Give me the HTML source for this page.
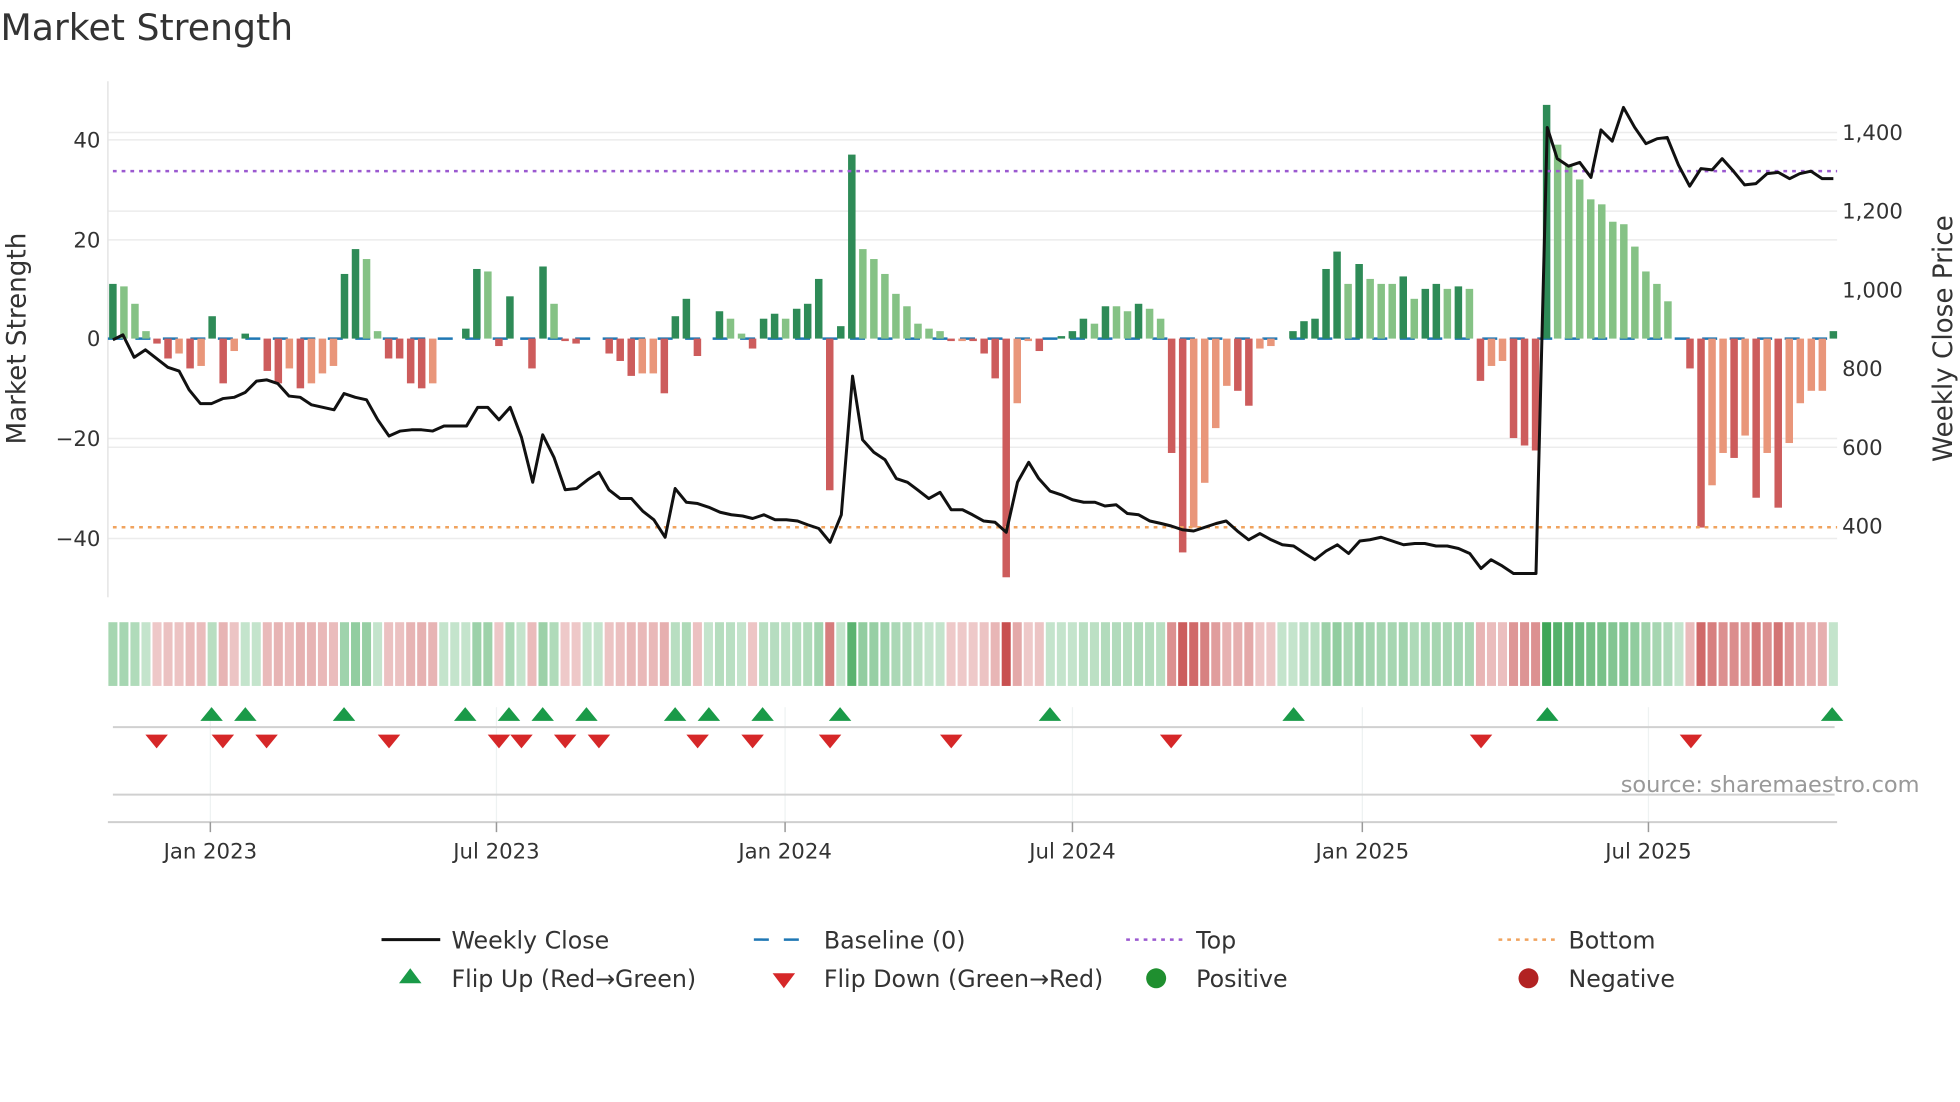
<!DOCTYPE html>
<html><head><meta charset="utf-8">
<style>
html,body{margin:0;padding:0;background:#fff;}
svg{display:block;font-family:"DejaVu Sans","Liberation Sans",sans-serif;}
</style></head>
<body>
<svg id="c" width="1960" height="1102" viewBox="0 0 1568 882" xmlns="http://www.w3.org/2000/svg">
<rect width="1568" height="882" fill="#fff"/>
<text x="0" y="32" font-size="29" fill="#333">Market Strength</text>
<g stroke="#ececec" stroke-width="1.2">
<line x1="86" y1="112" x2="1470" y2="112"/><line x1="86" y1="192" x2="1470" y2="192"/>
<line x1="86" y1="351" x2="1470" y2="351"/><line x1="86" y1="431" x2="1470" y2="431"/>
<line x1="86" y1="106" x2="1470" y2="106"/><line x1="86" y1="169" x2="1470" y2="169"/>
<line x1="86" y1="358" x2="1470" y2="358"/>
</g>
<line x1="86" y1="65" x2="86" y2="478" stroke="#e4e4e4" stroke-width="1.2"/>
<g font-size="17" fill="#333" text-anchor="end">
<text x="80" y="118">40</text><text x="80" y="198">20</text><text x="80" y="277">0</text>
<text x="80" y="357">−20</text><text x="80" y="437">−40</text></g>
<g font-size="17" fill="#333">
<text x="1474" y="112">1,400</text><text x="1474" y="175">1,200</text><text x="1474" y="238">1,000</text>
<text x="1474" y="301">800</text><text x="1474" y="364">600</text><text x="1474" y="427">400</text></g>
<text transform="translate(20,271) rotate(-90)" font-size="21" fill="#333" text-anchor="middle">Market Strength</text>
<text transform="translate(1562,271) rotate(-90)" font-size="21" fill="#333" text-anchor="middle">Weekly Close Price</text>
<line x1="86" y1="271" x2="1470" y2="271" stroke="#1f77b4" stroke-width="2" stroke-dasharray="12 10"/>
<g id="bars"></g>
<line x1="90" y1="137" x2="1470" y2="137" stroke="#9b59d0" stroke-width="2" stroke-dasharray="3 4"/>
<line x1="90" y1="422" x2="1470" y2="422" stroke="#f0a35e" stroke-width="2" stroke-dasharray="3 4"/>
<polyline id="price" fill="none" stroke="#111" stroke-width="2.4" stroke-linejoin="round"/>
<g id="heat"></g>
<g stroke="#eef2f2" stroke-width="1">
<line x1="168" y1="566" x2="168" y2="660"/><line x1="397" y1="566" x2="397" y2="660"/>
<line x1="628" y1="566" x2="628" y2="660"/><line x1="858" y1="566" x2="858" y2="660"/>
<line x1="1090" y1="566" x2="1090" y2="660"/><line x1="1319" y1="566" x2="1319" y2="660"/></g>
<line x1="90" y1="582" x2="1468" y2="582" stroke="#d0d0d0" stroke-width="1.6"/>
<line x1="90" y1="636" x2="1468" y2="636" stroke="#d0d0d0" stroke-width="1.6"/>
<line x1="86" y1="658" x2="1470" y2="658" stroke="#cfcfcf" stroke-width="1.6"/>
<g id="flips"></g>
<g stroke="#999" stroke-width="1.2">
<line x1="168" y1="658" x2="168" y2="666"/><line x1="397" y1="658" x2="397" y2="666"/>
<line x1="628" y1="658" x2="628" y2="666"/><line x1="858" y1="658" x2="858" y2="666"/>
<line x1="1090" y1="658" x2="1090" y2="666"/><line x1="1319" y1="658" x2="1319" y2="666"/></g>
<g font-size="17" fill="#333" text-anchor="middle">
<text x="168" y="687">Jan 2023</text><text x="397" y="687">Jul 2023</text><text x="628" y="687">Jan 2024</text>
<text x="858" y="687">Jul 2024</text><text x="1090" y="687">Jan 2025</text><text x="1319" y="687">Jul 2025</text></g>
<text x="1536" y="634" font-size="18" fill="#999" text-anchor="end">source: sharemaestro.com</text>
<g font-size="19" fill="#333">
<line x1="305" y1="752" x2="352" y2="752" stroke="#111" stroke-width="2.4"/>
<text x="361" y="759">Weekly Close</text>
<line x1="603" y1="752" x2="648" y2="752" stroke="#1f77b4" stroke-width="2" stroke-dasharray="12 12"/>
<text x="659" y="759">Baseline (0)</text>
<line x1="901" y1="752" x2="946" y2="752" stroke="#9b59d0" stroke-width="2" stroke-dasharray="3 4"/>
<text x="957" y="759">Top</text>
<line x1="1199" y1="752" x2="1244" y2="752" stroke="#f0a35e" stroke-width="2" stroke-dasharray="3 4"/>
<text x="1255" y="759">Bottom</text>
<polygon points="319,787 337,787 328,775" fill="#1a9a48"/>
<text x="361" y="790">Flip Up (Red→Green)</text>
<polygon points="618,779 636,779 627,791" fill="#d62728"/>
<text x="659" y="790">Flip Down (Green→Red)</text>
<circle cx="925" cy="783" r="8" fill="#1f8f2f"/>
<text x="957" y="790">Positive</text>
<circle cx="1223" cy="783" r="8" fill="#b22222"/>
<text x="1255" y="790">Negative</text>
</g>
</svg>
<script>
var NS="http://www.w3.org/2000/svg";
function el(t,a,p){var e=document.createElementNS(NS,t);for(var k in a)e.setAttribute(k,a[k]);p.appendChild(e);return e;}
var d="11G 10.5g 7g 1.5g -1R -4R -3O -6R -5.5O 4.5G -9R -2.5O 1G 0G -6.5R -9R -6O -10R -9O -7O -5.5O 13G 18G 16g 1.5g -4R -4R -9R -10R -9O 0G 0G 2G 14G 13.5g -1.5R 8.5G 0G -6R 14.5G 7g -0.5R -1R 0G 0G -3R -4.5R -7.5R -7O -7O -11R 4.5G 8G -3.5R 0G 5.5G 4g 1g -2R 4G 5G 4g 6G 7G 12G -30.5R 2.5G 37G 18g 16g 13g 9g 6.5g 3g 2g 1.5g -0.5R -0.5O -0.5R -3R -8R -48R -13O -0.5O -2.5R 0G 0.5G 1.5G 4G 3g 6.5G 6.5g 5.5g 7G 6g 4g -23R -43R -38O -29O -18O -9.5O -10.5R -13.5R -2O -1.5O 0G 1.5G 3.5G 4G 14G 17.5G 11g 15G 12g 11g 11g 12.5G 8g 10G 11G 10g 10.5G 10g -8.5R -5.5O -4.5O -20R -21.5R -22.5R 47G 39g 35g 32g 28g 27g 23.5g 23g 18.5g 13.5g 11g 7.5g 0G -6R -38R -29.5O -23O -24R -19.5O -32R -23O -34R -21O -13O -10.5O -10.5O 1.5G".split(" ");
var N=d.length,x0=90,x1=1467,st=(x1-x0)/(N-1);
var col={G:"#2e8b57",g:"#85c285",R:"#cd5c5c",O:"#e9967a"};
var bars=document.getElementById("bars"),heat=document.getElementById("heat");
d.forEach(function(s,i){
 var v=parseFloat(s),c=s.slice(-1),x=x0+i*st;
 if(v!==0){var h=Math.abs(v)*3.98,y=v>0?271-h:271;
 el("rect",{x:x-3,y:y,width:6,height:h,fill:col[c]},bars);}
 var a=0.3+0.7*Math.min(Math.abs(v)/48,1);
 var f=v>=0?"rgba(60,165,85,"+a+")":"rgba(200,80,80,"+a+")";
 if(v>=0&&v<3)f="rgba(60,165,85,0.3)";
 el("rect",{x:x-st/2+0.8,y:498,width:st-1.6,height:51,fill:f},heat);
});
var pts="90,272 98,268 107,286 116,280 125,287 134,294 143,297 151,312 160,323 169,323 178,319 187,318 196,314 205,305 213,304 222,307 231,317 240,318 249,324 258,326 267,328 275,315 284,318 293,320 302,336 311,349 320,345 329,344 337,344 346,345 355,341 364,341 373,341 382,326 390,326 399,336 408,326 417,350 426,386 434,348 443,366 452,392 461,391 470,384 479,378 487,392 496,399 505,399 514,409 523,416 532,430 540,391 549,402 558,403 567,406 576,410 585,412 594,413 602,415 611,412 620,416 629,416 638,417 646,420 655,423 664,434 673,412 682,301 690,352 699,362 708,368 717,383 726,386 734,392 743,399 752,394 761,408 770,408 778,412 787,417 796,418 805,426 814,386 823,370 831,383 840,393 849,396 858,400 867,402 876,402 884,405 893,404 902,411 911,412 920,417 929,419 937,421 946,424 955,425 964,422 973,419 981,417 990,425 999,432 1008,427 1017,432 1026,436 1035,437 1044,443 1052,448 1061,441 1070,436 1079,443 1088,433 1096,432 1105,430 1114,433 1123,436 1132,435 1140,435 1149,437 1158,437 1167,439 1176,443 1185,455 1193,448 1202,453 1211,459 1220,459 1229,459 1238,102 1246,127 1255,133 1264,130 1273,142 1281,104 1290,113 1299,86 1308,102 1317,115 1326,111 1334,110 1343,132 1352,149 1361,135 1370,136 1378,127 1387,137 1396,148 1405,147 1414,139 1423,138 1432,143 1440,139 1449,137 1458,143 1467,143";
document.getElementById("price").setAttribute("points",pts);
var fl=document.getElementById("flips");
[169,196,275,372,407,434,469,540,567,610,672,840,1035,1238,1466].forEach(function(x){
 el("polygon",{points:(x-9)+",577 "+(x+9)+",577 "+x+",566",fill:"#1a9a48"},fl);});
[125,178,213,311,399,417,452,479,558,602,664,761,937,1185,1353].forEach(function(x){
 el("polygon",{points:(x-9)+",588 "+(x+9)+",588 "+x+",599",fill:"#d62728"},fl);});
</script>
</body></html>
